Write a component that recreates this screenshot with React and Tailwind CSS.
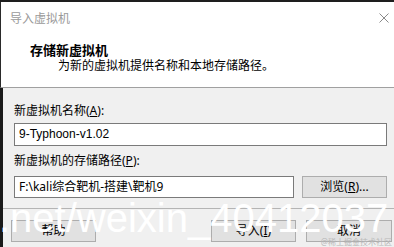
import React from "react";

const ui = "font-[family-name:'Noto_Sans','Noto_Sans_CJK_SC',sans-serif]";

const Key = ({ children }) => <span className="underline underline-offset-1">{children}</span>;

const Btn = ({ children, className = "" }) => (
  <button
    className={`h-[22px] w-[85px] border border-[#adadad] bg-[#e1e1e1] text-[12px] leading-[20px] text-black ${className}`}
  >
    {children}
  </button>
);

export default function App() {
  return (
    <div className={`relative w-[394px] h-[247px] overflow-hidden border-t-2 border-[#1e1e1e] bg-white ${ui}`}>
      {/* title + header */}
      <div className="h-[86px] border-l border-[#2a2a2a] border-b border-b-[#a0a0a0]">
        <div className="flex items-center justify-between pl-[9px] pr-[5px] pt-[9px] h-[25px]">
          <span className="text-[12px] leading-[16px] text-[#9a9a9a]">导入虚拟机</span>
          <svg width="10" height="10" viewBox="0 0 10 10" className="mt-[-2px]">
            <path d="M0.5 0.5 L9.5 9.5 M9.5 0.5 L0.5 9.5" stroke="#8a8a8a" strokeWidth="1" />
          </svg>
        </div>
        <div className="pl-[29px] pt-[15px]">
          <div className="text-[13px] font-bold leading-[16px] text-black">存储新虚拟机</div>
          <div className="pl-[28px] text-[12px] leading-[16px] text-black">为新的虚拟机提供名称和本地存储路径。</div>
        </div>
      </div>

      {/* body */}
      <div className="h-[159px] bg-[#f0f0f0] border-l-[3px] border-[#1a1a1a]">
        <div className="pl-[11px] pr-[7px] pt-[15px]">
          <div className="text-[12px] leading-[16px] text-black">
            新虚拟机名称(<Key>A</Key>):
          </div>
          <div className="mt-[4px] h-[23px] border border-[#7a7a7a] bg-white pl-[4px] text-[12px] leading-[21px] text-black font-[family-name:'Liberation_Sans',sans-serif]">
            9-Typhoon-v1.02
          </div>
          <div className="mt-[7px] text-[12px] leading-[16px] text-black">
            新虚拟机的存储路径(<Key>P</Key>):
          </div>
          <div className="mt-[7px] flex items-start gap-[8px]">
            <div className="h-[22px] w-[280px] border border-[#7a7a7a] bg-white pl-[4px] text-[12px] leading-[20px] text-black">
              {"F:\\kali综合靶机-搭建\\靶机9"}
            </div>
            <Btn className="h-[21px] leading-[19px]">
              浏览(<Key>R</Key>)...
            </Btn>
          </div>
        </div>
        <div className="mt-[10px] h-px bg-[#b4b4b4]" />
        <div className="mt-[11px] flex pl-[8px] pr-[2px]">
          <Btn>帮助</Btn>
          <div className="ml-auto flex gap-[10px]">
            <Btn>
              导入(<Key>I</Key>)
            </Btn>
            <Btn className="w-[86px]">取消</Btn>
          </div>
        </div>
      </div>

      {/* watermarks */}
      <div className="pointer-events-none absolute left-[-1px] top-[196px] whitespace-nowrap text-[40px] leading-[40px] text-white font-[family-name:'Liberation_Sans',sans-serif]">
        .net/weixin_40412037
      </div>
      <div className="pointer-events-none absolute right-[2px] bottom-[1px] text-[8px] leading-[9px] text-[#b8b8b8]">
        @稀土掘金技术社区
      </div>
    </div>
  );
}
